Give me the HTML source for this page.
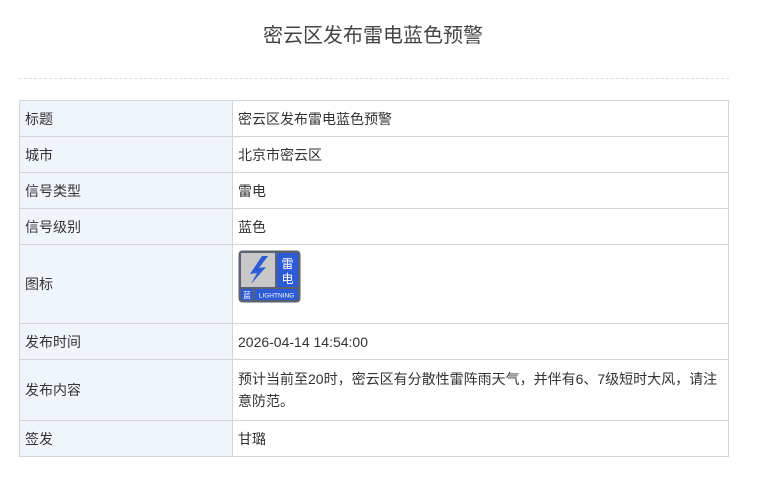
<html><head><style>
body{margin:0;background:#fff;font-family:"Liberation Sans","Noto Sans CJK SC",sans-serif;color:#333;}
h1{position:absolute;top:22px;left:0;width:746px;text-align:center;margin:0;font-size:20px;font-weight:normal;color:#444;line-height:28px}
.hr{position:absolute;top:78px;left:19px;width:710px;border-top:1px dashed #ddd}
table{position:absolute;top:100px;left:19px;width:710px;border-collapse:collapse;font-size:14px}
td{border:1px solid #d4d4d4;padding:0 5px;line-height:22px}
td.l{background:#f0f5fc;width:202px}
</style></head><body>
<h1>密云区发布雷电蓝色预警</h1>
<div class="hr"></div>
<table>
<tr style="height:36px"><td class="l">标题</td><td>密云区发布雷电蓝色预警</td></tr>
<tr style="height:36px"><td class="l">城市</td><td>北京市密云区</td></tr>
<tr style="height:36px"><td class="l">信号类型</td><td>雷电</td></tr>
<tr style="height:36px"><td class="l">信号级别</td><td>蓝色</td></tr>
<tr style="height:79px"><td class="l">图标</td><td style="vertical-align:top;padding-top:5px">
<svg width="63" height="53" viewBox="0 0 63 53" style="display:block">
<rect x="0.5" y="0.5" width="62" height="52" rx="4" fill="#5a6270"/>
<rect x="3" y="3" width="34" height="34" fill="#c8c8c8"/>
<path d="M24 6 L12 24 L19 23 L13 34 L28 17 L21 18 L30 6 Z" fill="#2d5bd8"/>
<rect x="39" y="3" width="21" height="34" fill="#2d5bd8"/>
<text x="49.5" y="18" font-size="12" fill="#fff" text-anchor="middle">雷</text>
<text x="49.5" y="33" font-size="12" fill="#fff" text-anchor="middle">电</text>
<rect x="3" y="39" width="12" height="11" fill="#2d5bd8"/>
<text x="9" y="48" font-size="8" fill="#fff" text-anchor="middle">蓝</text>
<rect x="17" y="39" width="43" height="11" fill="#2d5bd8"/>
<text x="38.5" y="47.5" font-size="6.5" fill="#fff" text-anchor="middle">LIGHTNING</text>
</svg></td></tr>
<tr style="height:36px"><td class="l">发布时间</td><td>2026-04-14 14:54:00</td></tr>
<tr style="height:61px"><td class="l">发布内容</td><td>预计当前至20时，密云区有分散性雷阵雨天气，并伴有6、7级短时大风，请注意防范。</td></tr>
<tr style="height:36px"><td class="l">签发</td><td>甘璐</td></tr>
</table>
</body></html>
